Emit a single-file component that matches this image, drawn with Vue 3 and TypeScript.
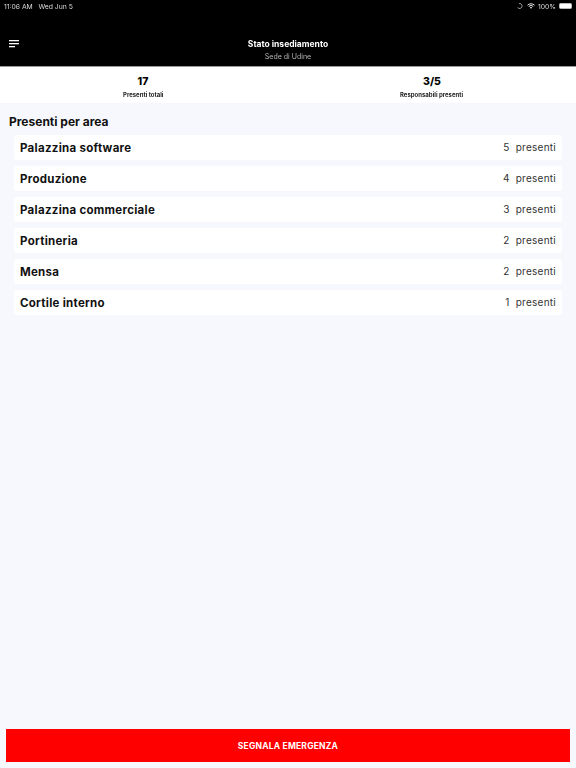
<script setup lang="ts">
interface AreaRow {
  name: string
  count: number
}

const areas: AreaRow[] = [
  { name: "Palazzina software", count: 5 },
  { name: "Produzione", count: 4 },
  { name: "Palazzina commerciale", count: 3 },
  { name: "Portineria", count: 2 },
  { name: "Mensa", count: 2 },
  { name: "Cortile interno", count: 1 }
]

const stats = [
  { value: "17", label: "Presenti totali" },
  { value: "3/5", label: "Responsabili presenti" }
]
</script>

<template>
  <main class="screen">
    <header class="topbar">
      <div class="status">
        <span>11:06 AM&nbsp;&nbsp; Wed Jun 5</span>
        <div class="status-right">
          <svg class="moon" width="6" height="6" viewBox="0 0 6 6">
            <path d="M2 .6a2.5 2.5 0 1 1-1.4 3.9" fill="none" stroke="#aaa" stroke-width=".9" />
          </svg>
          <svg width="8" height="6" viewBox="0 0 16 12" fill="none" stroke="#fff" stroke-width="1.8">
            <path d="M1 4.4a10 10 0 0 1 14 0" />
            <path d="M3.4 6.9a6.6 6.6 0 0 1 9.2 0" />
            <path d="M8 11.5 5.6 9.2a3.4 3.4 0 0 1 4.8 0z" fill="#fff" stroke="none" />
          </svg>
          <span>100%</span>
          <div class="battery"></div>
        </div>
      </div>
      <div class="nav">
        <svg class="menu" width="10" height="8" viewBox="0 0 10 8">
          <rect x="0" y="0" width="10" height="1.3" fill="#fff" />
          <rect x="0" y="3" width="10" height="1.3" fill="#fff" />
          <rect x="0" y="6" width="6" height="1.3" fill="#fff" />
        </svg>
        <div class="title">Stato insediamento</div>
        <div class="subtitle">Sede di Udine</div>
      </div>
    </header>

    <section class="stats">
      <div v-for="stat in stats" :key="stat.label" class="stat">
        <strong>{{ stat.value }}</strong>
        <span>{{ stat.label }}</span>
      </div>
    </section>

    <section class="content">
      <h2>Presenti per area</h2>
      <ul class="areas">
        <li v-for="area in areas" :key="area.name" class="area">
          <span class="area-name">{{ area.name }}</span>
          <span class="area-count">{{ area.count }}&nbsp; presenti</span>
        </li>
      </ul>
    </section>

    <div class="footer">
      <button class="emergency" type="button">SEGNALA EMERGENZA</button>
    </div>
  </main>
</template>

<style scoped>
.screen {
  display: flex;
  flex-direction: column;
  height: 768px;
  background: #f7f8fd;
  font-family: Inter, "Noto Sans", sans-serif;
  color: #000;
}

.topbar {
  height: 66px;
  background: #000;
  border-bottom: 1px solid #9a9a9a;
  color: #fff;
}

.status {
  display: flex;
  justify-content: space-between;
  align-items: center;
  height: 12px;
  padding: 0 4px;
  font-size: 6.8px;
  color: #ddd;
  will-change: transform;
}

.status-right {
  display: flex;
  align-items: center;
  gap: 3px;
}

.moon {
  margin-right: 1px;
}

.battery {
  width: 13px;
  height: 6px;
  border: 1px solid #bbb;
  border-radius: 1.5px;
  box-sizing: border-box;
  background: #fff;
}

.nav {
  position: relative;
  padding-top: 21px;
  text-align: center;
}

.menu {
  position: absolute;
  left: 9px;
  top: 28px;
}

.title {
  font-size: 8.5px;
  font-weight: 700;
  line-height: 22px;
  will-change: transform;
}

.subtitle {
  margin-top: -3px;
  font-size: 7px;
  line-height: 9px;
  color: #b5b5b5;
  will-change: transform;
}

.stats {
  display: grid;
  grid-template-columns: 1fr 1fr;
  height: 36px;
  background: #fff;
}

.stat {
  display: flex;
  flex-direction: column;
  align-items: center;
  padding: 7px 2px 0 0;
}

.stat + .stat {
  padding-right: 0;
}

.stat strong {
  font-size: 10.5px;
  font-weight: 800;
  line-height: 15px;
}

.stat span {
  margin-top: 2px;
  font-size: 6px;
  font-weight: 700;
  line-height: 8px;
  color: #222;
  will-change: transform;
}

.content {
  flex: 1;
  padding: 11px 14px 0;
}

h2 {
  margin: 0 0 5px -5px;
  font-size: 12px;
  font-weight: 700;
  line-height: 16px;
  color: #111;
}

.areas {
  display: flex;
  flex-direction: column;
  gap: 6px;
  margin: 0;
  padding: 0;
  list-style: none;
}

.area {
  display: flex;
  justify-content: space-between;
  align-items: center;
  height: 25px;
  padding: 0 6px;
  background: #fff;
  border-radius: 3px;
}

.area-name {
  font-size: 11.5px;
  font-weight: 700;
  letter-spacing: 0.28px;
  color: #111;
}

.area-count {
  padding-bottom: 1px;
  font-size: 10px;
  letter-spacing: 0.25px;
  color: #333;
}

.footer {
  padding: 0 6px 6px;
}

.emergency {
  display: block;
  width: 100%;
  height: 33px;
  border: 0;
  background: #ff0000;
  color: #fff;
  font-family: inherit;
  font-size: 8.5px;
  font-weight: 700;
  letter-spacing: 0.2px;
}
</style>
